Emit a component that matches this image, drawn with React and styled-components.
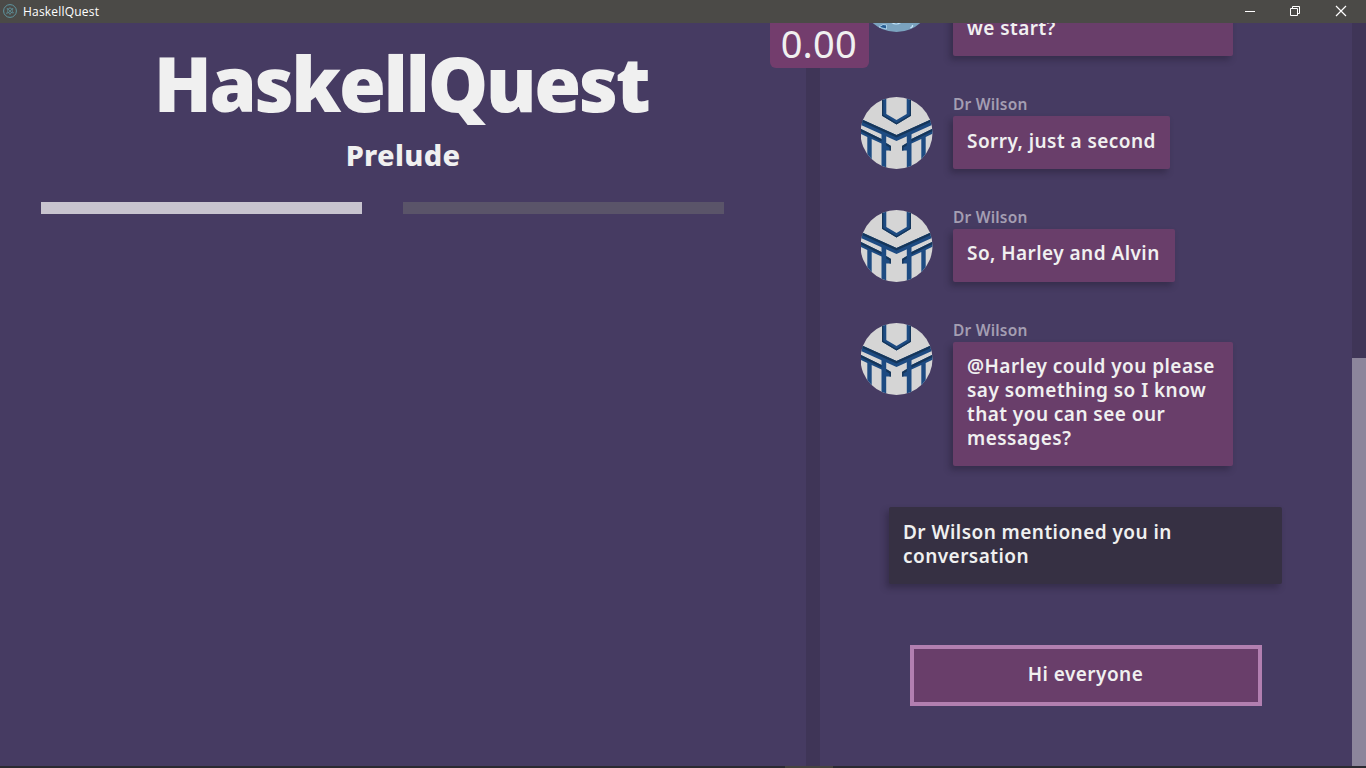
import React from "react";
import styled, { createGlobalStyle } from "styled-components";

const sans = `"Noto Sans", "Open Sans", sans-serif`;

const GlobalStyle = createGlobalStyle`
  * { box-sizing: border-box; }
  body {
    margin: 0;
    overflow: hidden;
    background: #463b62;
    color: #f0f0f0;
    font-family: ${sans};
  }
`;

const Window = styled.div`
  display: flex;
  flex-direction: column;
  width: 1366px;
  height: 768px;
`;

const TitleBar = styled.header`
  display: flex;
  align-items: center;
  flex: none;
  height: 23px;
  padding: 0 1px 0 3px;
  background: #4b4a47;
`;

const AppIcon = styled.svg`
  width: 14px;
  height: 14px;
  margin: -1px 6px 0 0;
`;

const AppName = styled.span`
  flex: 1;
  font: 400 12px/22px "Open Sans", sans-serif;
  letter-spacing: 0.2px;
  color: #fff;
`;

const WindowButton = styled.button`
  display: grid;
  place-items: center;
  width: ${(p) => p.$width}px;
  height: 21px;
  margin-top: -2px;
  padding: 0;
  border: 0;
  background: none;

  svg { display: block; width: 12px; height: 12px; }
`;

const Body = styled.div`
  position: relative;
  display: flex;
  flex: 1;
  min-height: 0;
`;

const Score = styled.div`
  position: absolute;
  top: 0;
  left: 769.5px;
  width: 99.5px;
  height: 45px;
  padding-right: 1px;
  border-radius: 0 0 6px 6px;
  background: #733d6d;
  font-size: 38px;
  line-height: 41px;
  letter-spacing: 0.2px;
  text-align: center;
`;

const Story = styled.main`
  display: flex;
  flex-direction: column;
  align-items: center;
  width: 806px;
`;

const Title = styled.h1`
  margin: 20px 4px 0 0;
  font-size: 76px;
  font-weight: 900;
  line-height: 80px;
  letter-spacing: -2.45px;
`;

const Subtitle = styled.h2`
  margin: 12px 0 0;
  font-size: 29px;
  font-weight: 800;
  line-height: 40px;
  letter-spacing: 0.3px;
`;

const Progress = styled.div`
  display: flex;
  gap: 41px;
  align-self: stretch;
  margin-top: 27px;
  padding: 0 41px;
`;

const Step = styled.div`
  width: 321px;
  height: 12px;
  background: ${(p) => (p.$done ? "#c8c4cf" : "#5a5469")};
`;

const Divider = styled.div`
  width: 14px;
  background: #3f3557;
`;

const Chat = styled.section`
  display: flex;
  flex-direction: column;
  justify-content: flex-end;
  gap: 41px;
  width: 532px;
  padding: 0 0 60px 41px;
  overflow: hidden;
`;

const Message = styled.article`
  display: flex;
  flex: none;
  align-items: flex-start;
  gap: 20px;
`;

const AvatarArt = styled.svg`
  flex: none;
  width: 72px;
  height: 72px;
`;

const Content = styled.div`
  display: flex;
  flex-direction: column;
  align-items: flex-start;
`;

const Author = styled.div`
  height: 19px;
  font-size: 15.5px;
  font-weight: 600;
  line-height: 14px;
  letter-spacing: 0.2px;
  color: #a49eb2;
`;

const Bubble = styled.div`
  flex: none;
  width: ${(p) => p.$width}px;
  height: ${(p) => p.$height}px;
  padding: ${(p) => (p.$raised ? 12 : 13)}px 0 0 14px;
  border-radius: 2px;
  background: #693e6a;
  box-shadow: -3px 4px 6px rgba(35, 28, 50, 0.45);
`;

const Line = styled.div`
  height: 24px;
  font-size: 19px;
  font-weight: 600;
  line-height: 24px;
  letter-spacing: 0.45px;
  white-space: pre;
`;

const Notice = styled(Bubble)`
  margin-left: 28px;
  background: #363043;
`;

const Reply = styled.button`
  flex: none;
  width: 352px;
  height: 61px;
  margin: 20px 0 0 49px;
  padding: 0 1px 3px 0;
  border: 4px solid #b27fb0;
  background: #693e6a;
  color: #f0f0f0;
  font: 600 19px/24px ${sans};
  letter-spacing: 0.45px;
`;

const Scrollbar = styled.div`
  display: flex;
  align-items: flex-end;
  width: 14px;
  background: #3f3557;
`;

const Thumb = styled.div`
  width: 14px;
  height: 408px;
  background: #8c859b;
`;

const BottomEdge = styled.div`
  display: flex;
  flex: none;
  height: 2px;
  padding-left: 785px;
  background: #2b2a31;
`;

const EdgeMark = styled.div`
  width: 48px;
  background: #45433f;
`;

function RobotAvatar() {
  return (
    <AvatarArt viewBox="0 0 72 72">
      <defs>
        <clipPath id="face"><circle cx="35.5" cy="36" r="36" /></clipPath>
      </defs>
      <g clipPath="url(#face)">
        <rect width="72" height="72" fill="#d5d5d5" />
        <g fill="#1d4b82">
          <path d="M21 -1H25.300V17L35.500 23L45.700 17V-1H50V18.700L35.500 27.500L21 18.700Z" />
          <path d="M-1 21.500L35.500 38L72 21.500V27.500L35.500 44L-1 27.500Z" />
          <path d="M-1 31.500L20.500 42V36H25.200V46L30 49V53.500H25.200V73H20.500V46.500L10.700 42V73H6.300V40L-1 36.500Z" />
          <path d="M72 31.500L50.500 42V36H45.800V46L41 49V53.500H45.800V73H50.500V46.500L60.300 42V73H64.700V40L72 36.500Z" />
        </g>
        <g fill="#15365a">
          <path d="M-1 21.500L35.500 38L72 21.500V24L35.500 40.500L-1 24Z" />
          <path d="M-1 31.500L20.500 42V44.500L-1 34Z" />
          <path d="M72 31.500L50.500 42V44.500L72 34Z" />
          <path d="M21 -1H22.300V18L35.500 26L48.700 18V-1H50V18.700L35.500 27.500L21 18.700Z" />
          <path d="M25.200 46L30 49V53.500H28.500V50.500L25.200 48.500ZM45.800 46L41 49V53.500H42.500V50.500L45.800 48.500Z" />
        </g>
      </g>
    </AvatarArt>
  );
}

function PatternAvatar() {
  return (
    <AvatarArt viewBox="0 0 72 72">
      <circle cx="35.5" cy="36" r="36" fill="#7ba3bf" />
      <path d="M18 67L22 64.500L25.500 65V69L21 68Z" fill="#255b91" stroke="#b7dcf5" strokeWidth="0.8" />
      <path d="M30 62Q35 66 40.500 62" fill="#3a72a5" stroke="#c4e5fa" strokeWidth="1.200" />
      <path d="M49.500 68L51.500 66.500V65" fill="none" stroke="#c4e5fa" strokeWidth="1.300" />
    </AvatarArt>
  );
}

const messages = [
  { avatar: PatternAvatar, author: "", lines: ["", "we start?"], width: 280, height: 77 },
  { avatar: RobotAvatar, author: "Dr Wilson", lines: ["Sorry, just a second"], width: 217, height: 53 },
  { avatar: RobotAvatar, author: "Dr Wilson", lines: ["So, Harley and Alvin"], width: 222, height: 53, raised: true },
  {
    avatar: RobotAvatar,
    author: "Dr Wilson",
    lines: ["@Harley could you please", "say something so I know", "that you can see our", "messages?"],
    width: 280,
    height: 124,
    raised: true,
  },
];

export default function App() {
  return (
    <Window>
      <GlobalStyle />
      <TitleBar>
        <AppIcon viewBox="0 0 14 14" fill="none" stroke="#5f96a0">
          <circle cx="7" cy="7" r="6.4" />
          <path d="M4 4.500L6 5L7 3.500L8 5L10 4.500L9 7L10.500 9L8 8.500L7 10.500L6 8.500L3.500 9.500L5 7ZM5 5L9 9M9 5L5 9" strokeWidth="0.700" />
        </AppIcon>
        <AppName>HaskellQuest</AppName>
        <WindowButton $width={45} aria-label="Minimize">
          <svg viewBox="0 0 12 12"><path d="M1 6.500H11" stroke="#fff" /></svg>
        </WindowButton>
        <WindowButton $width={45} aria-label="Restore">
          <svg viewBox="0 0 12 12" fill="none" stroke="#fff">
            <path d="M1.500 3.500H8.500V10.500H1.500ZM3.500 3.500V1.500H10.500V8.500H8.500" />
          </svg>
        </WindowButton>
        <WindowButton $width={48} aria-label="Close">
          <svg viewBox="0 0 12 12"><path d="M1 1L11 11M11 1L1 11" stroke="#fff" strokeWidth="1.200" /></svg>
        </WindowButton>
      </TitleBar>
      <Body>
        <Story>
          <Title>HaskellQuest</Title>
          <Subtitle>Prelude</Subtitle>
          <Progress>
            <Step $done />
            <Step />
          </Progress>
        </Story>
        <Divider />
        <Chat>
          {messages.map(({ avatar: Avatar, author, lines, width, height, raised }, i) => (
            <Message key={i}>
              <Avatar />
              <Content>
                <Author>{author}</Author>
                <Bubble $width={width} $height={height} $raised={raised}>
                  {lines.map((text, n) => <Line key={n}>{text}</Line>)}
                </Bubble>
              </Content>
            </Message>
          ))}
          <Notice $width={393} $height={77}>
            <Line>Dr Wilson mentioned you in</Line>
            <Line>conversation</Line>
          </Notice>
          <Reply>Hi everyone</Reply>
        </Chat>
        <Scrollbar><Thumb /></Scrollbar>
        <Score>0.00</Score>
      </Body>
      <BottomEdge><EdgeMark /></BottomEdge>
    </Window>
  );
}
